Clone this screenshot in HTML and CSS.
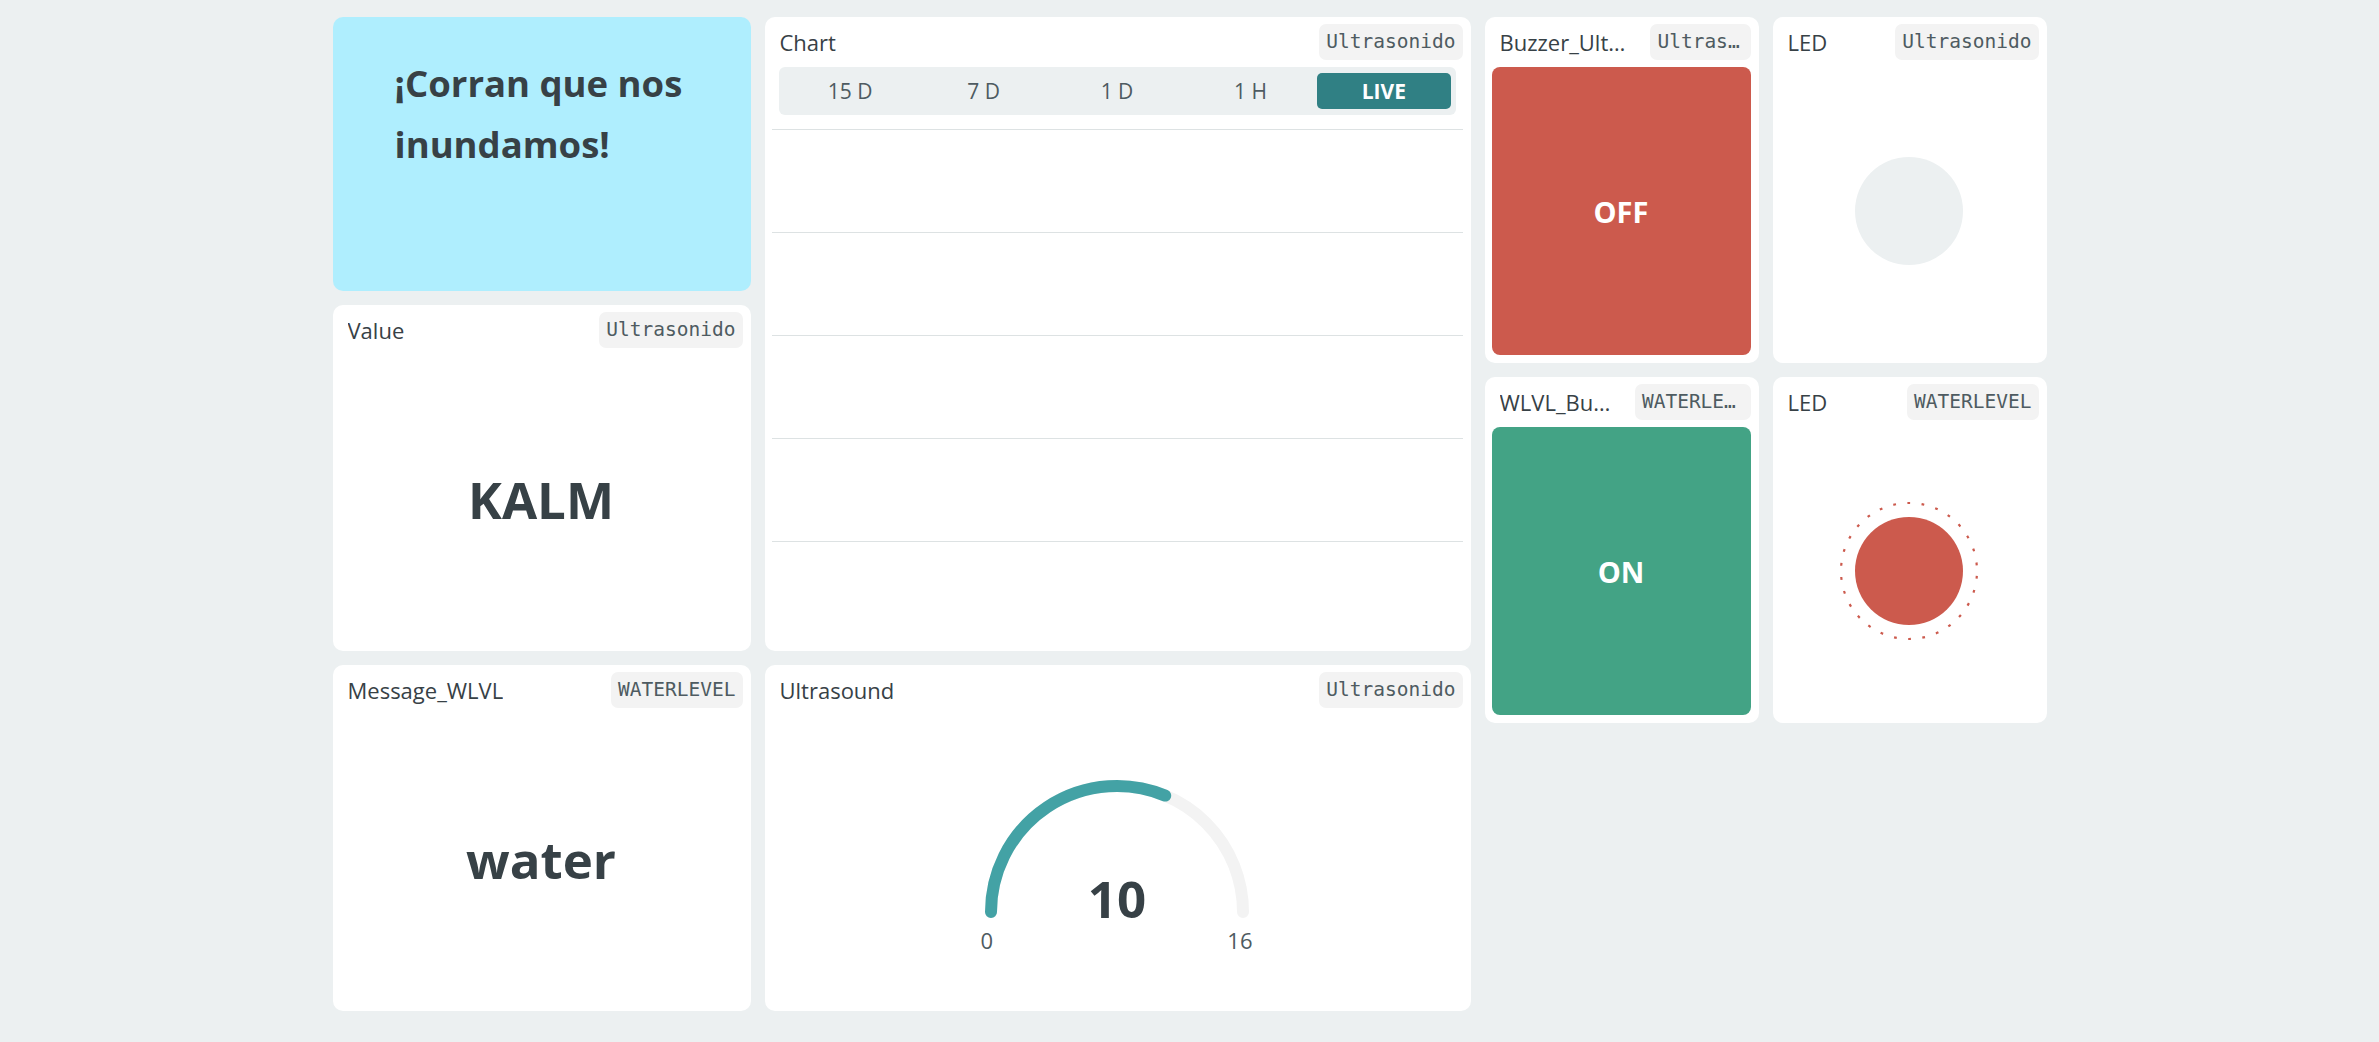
FILE: index.html
```html
<!DOCTYPE html>
<html lang="es">
<head>
<meta charset="utf-8">
<title>Dashboard</title>
<link rel="stylesheet" href="styles.css">
</head>
<body>
<main class="board">
  <section class="note w-note">
    <p>¡Corran que nos inundamos!</p>
  </section>

  <section class="card w-value">
    <header class="card-head"><span class="card-title">Value</span><span class="tag">Ultrasonido</span></header>
    <div class="card-body"><span class="big-value">KALM</span></div>
  </section>

  <section class="card w-message">
    <header class="card-head"><span class="card-title">Message_WLVL</span><span class="tag">WATERLEVEL</span></header>
    <div class="card-body"><span class="big-value">water</span></div>
  </section>

  <section class="card w-chart">
    <header class="card-head"><span class="card-title">Chart</span><span class="tag">Ultrasonido</span></header>
    <div class="chart-body">
      <div class="ranges">
        <span class="range">15 D</span>
        <span class="range">7 D</span>
        <span class="range">1 D</span>
        <span class="range">1 H</span>
        <span class="range active">LIVE</span>
      </div>
      <div class="plot">
        <div class="gridline"></div>
        <div class="gridline"></div>
        <div class="gridline"></div>
        <div class="gridline"></div>
        <div class="gridline"></div>
      </div>
    </div>
  </section>

  <section class="card w-gauge">
    <header class="card-head"><span class="card-title">Ultrasound</span><span class="tag">Ultrasonido</span></header>
    <div class="card-body">
      <svg class="gauge" width="280" height="182" viewBox="0 0 280 182">
        <path d="M 14 138 A 126 126 0 0 1 266 138" fill="none" stroke="#f3f3f3" stroke-width="12" stroke-linecap="round"/>
        <path d="M 14 138 A 126 126 0 0 1 188.2 21.6" fill="none" stroke="#43a2a5" stroke-width="12" stroke-linecap="round"/>
        <text class="gauge-value" x="140" y="143.7" text-anchor="middle">10</text>
        <text class="gauge-label" x="3.5" y="174.7" text-anchor="start">0</text>
        <text class="gauge-label" x="275.5" y="174.7" text-anchor="end">16</text>
      </svg>
    </div>
  </section>

  <section class="card w-buzzer">
    <header class="card-head"><span class="card-title">Buzzer_Ultrasonido</span><span class="tag">Ultrasonido</span></header>
    <div class="card-body"><div class="switch off">OFF</div></div>
  </section>

  <section class="card w-led1">
    <header class="card-head"><span class="card-title">LED</span><span class="tag">Ultrasonido</span></header>
    <div class="card-body"><div class="led"></div></div>
  </section>

  <section class="card w-wlvl">
    <header class="card-head"><span class="card-title">WLVL_Buzzer</span><span class="tag">WATERLEVEL</span></header>
    <div class="card-body"><div class="switch on">ON</div></div>
  </section>

  <section class="card w-led2">
    <header class="card-head"><span class="card-title">LED</span><span class="tag">WATERLEVEL</span></header>
    <div class="card-body">
      <svg class="led-on" width="140" height="140" viewBox="0 0 140 140">
        <circle cx="70" cy="70" r="68" fill="none" stroke="#cc5a4d" stroke-width="2.2" stroke-dasharray="2.8 11.44" stroke-dashoffset="-5"/>
        <circle cx="70" cy="70" r="54" fill="#cc5a4d"/>
      </svg>
    </div>
  </section>
</main>
</body>
</html>
```

FILE: styles.css
```css
* { box-sizing: border-box; }

html, body {
  margin: 0;
  background: #ecf0f1;
  font-family: "Open Sans", "Noto Sans", sans-serif;
  color: #374146;
}

.board {
  display: grid;
  grid-template-columns: repeat(12, 130px);
  grid-auto-rows: 58px;
  gap: 14px;
  width: 1714px;
  margin: 0 auto;
  padding: 17px 0;
}

.w-note    { grid-column: 1 / span 3; grid-row: 1 / span 4; }
.w-value   { grid-column: 1 / span 3; grid-row: 5 / span 5; }
.w-message { grid-column: 1 / span 3; grid-row: 10 / span 5; }
.w-chart   { grid-column: 4 / span 5; grid-row: 1 / span 9; }
.w-gauge   { grid-column: 4 / span 5; grid-row: 10 / span 5; }
.w-buzzer  { grid-column: 9 / span 2; grid-row: 1 / span 5; }
.w-led1    { grid-column: 11 / span 2; grid-row: 1 / span 5; }
.w-wlvl    { grid-column: 9 / span 2; grid-row: 6 / span 5; }
.w-led2    { grid-column: 11 / span 2; grid-row: 6 / span 5; }

.note {
  background: #afeefe;
  border-radius: 10px;
  padding: 36px 60px 36px 62px;
}
.note p {
  margin: 0;
  font-size: 36.5px;
  line-height: 61px;
  font-weight: 700;
  color: #374146;
}

.card {
  display: flex;
  flex-direction: column;
  background: #fff;
  border-radius: 10px;
  min-width: 0;
  overflow: hidden;
}

.card-head {
  display: flex;
  align-items: center;
  justify-content: space-between;
  gap: 18px;
  height: 43px;
  padding: 7px 8px 0 15px;
  flex: none;
}

.card-title {
  font-size: 22px;
  font-weight: 500;
  line-height: 30px;
  color: #374146;
  white-space: nowrap;
  overflow: hidden;
  text-overflow: ellipsis;
  min-width: 0;
  flex: 0 1 auto;
}

.tag {
  font-family: "DejaVu Sans Mono", "Liberation Mono", monospace;
  font-size: 19.5px;
  height: 36px;
  line-height: 36px;
  padding: 0 7px;
  background: #f3f3f3;
  color: #4e5b61;
  border-radius: 7px;
  white-space: nowrap;
  overflow: hidden;
  text-overflow: ellipsis;
  min-width: 0;
  flex: 0 1 auto;
}

.card-body {
  flex: 1;
  min-height: 0;
  display: flex;
  align-items: center;
  justify-content: center;
  padding: 7px 8px 8px 7px;
}

.big-value {
  font-size: 51px;
  font-weight: 700;
  color: #374146;
}

.switch {
  align-self: stretch;
  flex: 1;
  display: flex;
  align-items: center;
  justify-content: center;
  border-radius: 8px;
  color: #fff;
  font-size: 29px;
  font-weight: 700;
}
.switch.off { background: #cc5a4d; }
.switch.on  { background: #43a385; }

.led {
  width: 108px;
  height: 108px;
  border-radius: 50%;
  background: #ecf0f1;
}

.chart-body {
  flex: 1;
  display: flex;
  flex-direction: column;
  padding-top: 7px;
}

.ranges {
  display: flex;
  height: 48px;
  margin: 0 15px 0 14px;
  padding: 6px 5px;
  background: #ecf0f1;
  border-radius: 6px;
}

.range {
  flex: 1;
  display: flex;
  align-items: center;
  justify-content: center;
  font-size: 21px;
  color: #4e5b61;
  border-radius: 5px;
}
.range.active {
  background: #308084;
  color: #fff;
  font-weight: 700;
}

.plot {
  margin: 14px 8px 0 7px;
}
.gridline {
  height: 103px;
  border-top: 1px solid #dde2e3;
}

.gauge { margin-top: 11px; }
.gauge-value {
  font-family: "Open Sans", sans-serif;
  font-size: 51px;
  font-weight: 700;
  fill: #374146;
}
.gauge-label {
  font-family: "Open Sans", sans-serif;
  font-size: 22px;
  fill: #4e5b61;
}
```
